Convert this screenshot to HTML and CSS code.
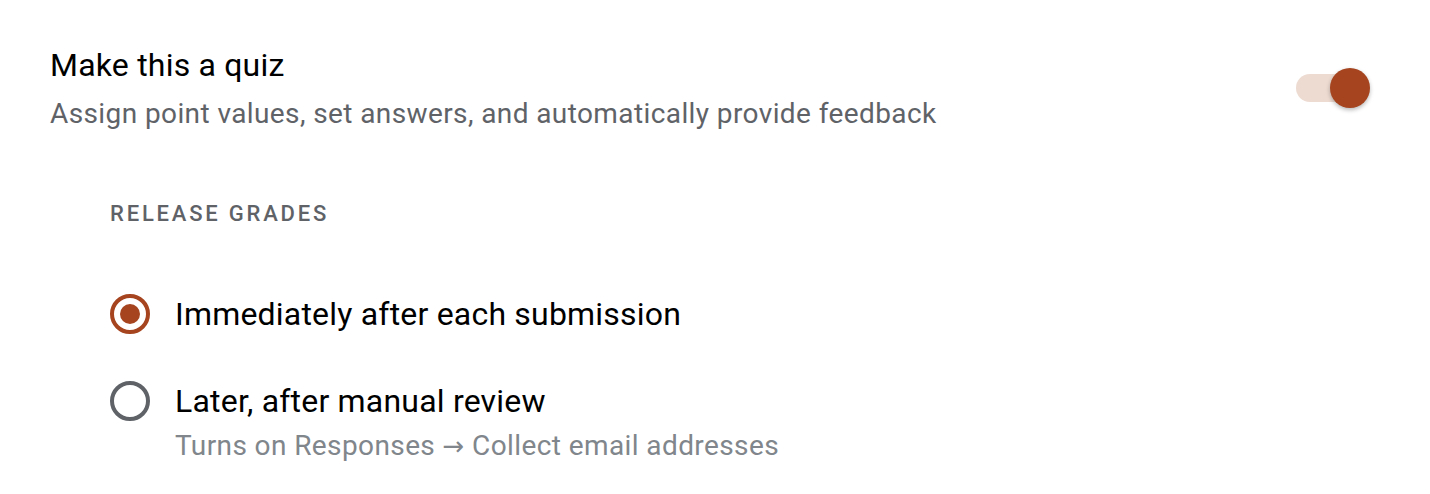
FILE: index.html
```html
<!DOCTYPE html>
<html lang="en">
<head>
  <meta charset="UTF-8">
  <title>Quiz settings</title>
  <link rel="stylesheet" href="styles.css">
</head>
<body>

  <!-- Quiz toggle -->
  <div class="quiz-row">
    <div class="quiz-text">
      <div class="quiz-title">Make this a quiz</div>
      <div class="quiz-desc">Assign point values, set answers, and automatically provide feedback</div>
    </div>
    <div class="toggle on">
      <span class="toggle-track"></span>
      <span class="toggle-thumb"></span>
    </div>
  </div>

  <!-- Release grades -->
  <div class="release">
    <div class="release-title">RELEASE GRADES</div>

    <div class="option">
      <span class="radio checked"></span>
      <span class="option-label">Immediately after each submission</span>
    </div>

    <div class="option second">
      <span class="radio"></span>
      <span class="option-label">Later, after manual review</span>
    </div>
    <div class="option-hint">Turns on Responses <span class="arrow">&rarr;</span> Collect email addresses</div>
  </div>

</body>
</html>
```

FILE: styles.css
```css
/* Page */
body {
  margin: 0;
  padding: 45px 60px 0 50px;
  background: #ffffff;
  font-family: Roboto, "Noto Sans", sans-serif;
  color: #000000;
}

/* Quiz toggle row */
.quiz-row {
  display: flex;
  justify-content: space-between;
  align-items: center;
}

.quiz-title {
  font-size: 32px;
  line-height: 40px;
  letter-spacing: 0.2px;
}

.quiz-desc {
  margin-top: 13px;
  font-size: 28px;
  line-height: 32px;
  letter-spacing: 0.4px;
  color: #5f6368;
}

/* Switch */
.toggle {
  position: relative;
  width: 74px;
  height: 40px;
  display: flex;
  align-items: center;
}

.toggle-track {
  width: 68px;
  height: 28px;
  border-radius: 14px;
  background-color: #eddbd1;
}

.toggle-thumb {
  position: absolute;
  right: 0;
  top: 0;
  width: 40px;
  height: 40px;
  border-radius: 50%;
  background-color: #a5441e;
  box-shadow: 0 2px 4px rgba(0, 0, 0, 0.28);
}

/* Release grades */
.release {
  padding-left: 60px;
  margin-top: 72px;
}

.release-title {
  font-size: 22px;
  line-height: 24px;
  font-weight: 500;
  letter-spacing: 2.8px;
  color: #5f6368;
  margin-bottom: 68px;
}

.option {
  display: flex;
  align-items: center;
  gap: 25px;
}

.option.second {
  margin-top: 47px;
}

.option-label {
  font-size: 32px;
  line-height: 40px;
  letter-spacing: 0.2px;
}

.radio {
  box-sizing: border-box;
  width: 40px;
  height: 40px;
  border: 4px solid #5f6368;
  border-radius: 50%;
  display: flex;
  align-items: center;
  justify-content: center;
}

.radio.checked {
  border-color: #a5441e;
}

.radio.checked::after {
  content: "";
  width: 20px;
  height: 20px;
  border-radius: 50%;
  background-color: #a5441e;
}

.option-hint {
  margin: 9px 0 0 65px;
  font-size: 28px;
  line-height: 32px;
  letter-spacing: 0.4px;
  color: #80868b;
}

.option-hint .arrow {
  font-family: "DejaVu Sans", sans-serif;
  font-size: 26px;
}
```
